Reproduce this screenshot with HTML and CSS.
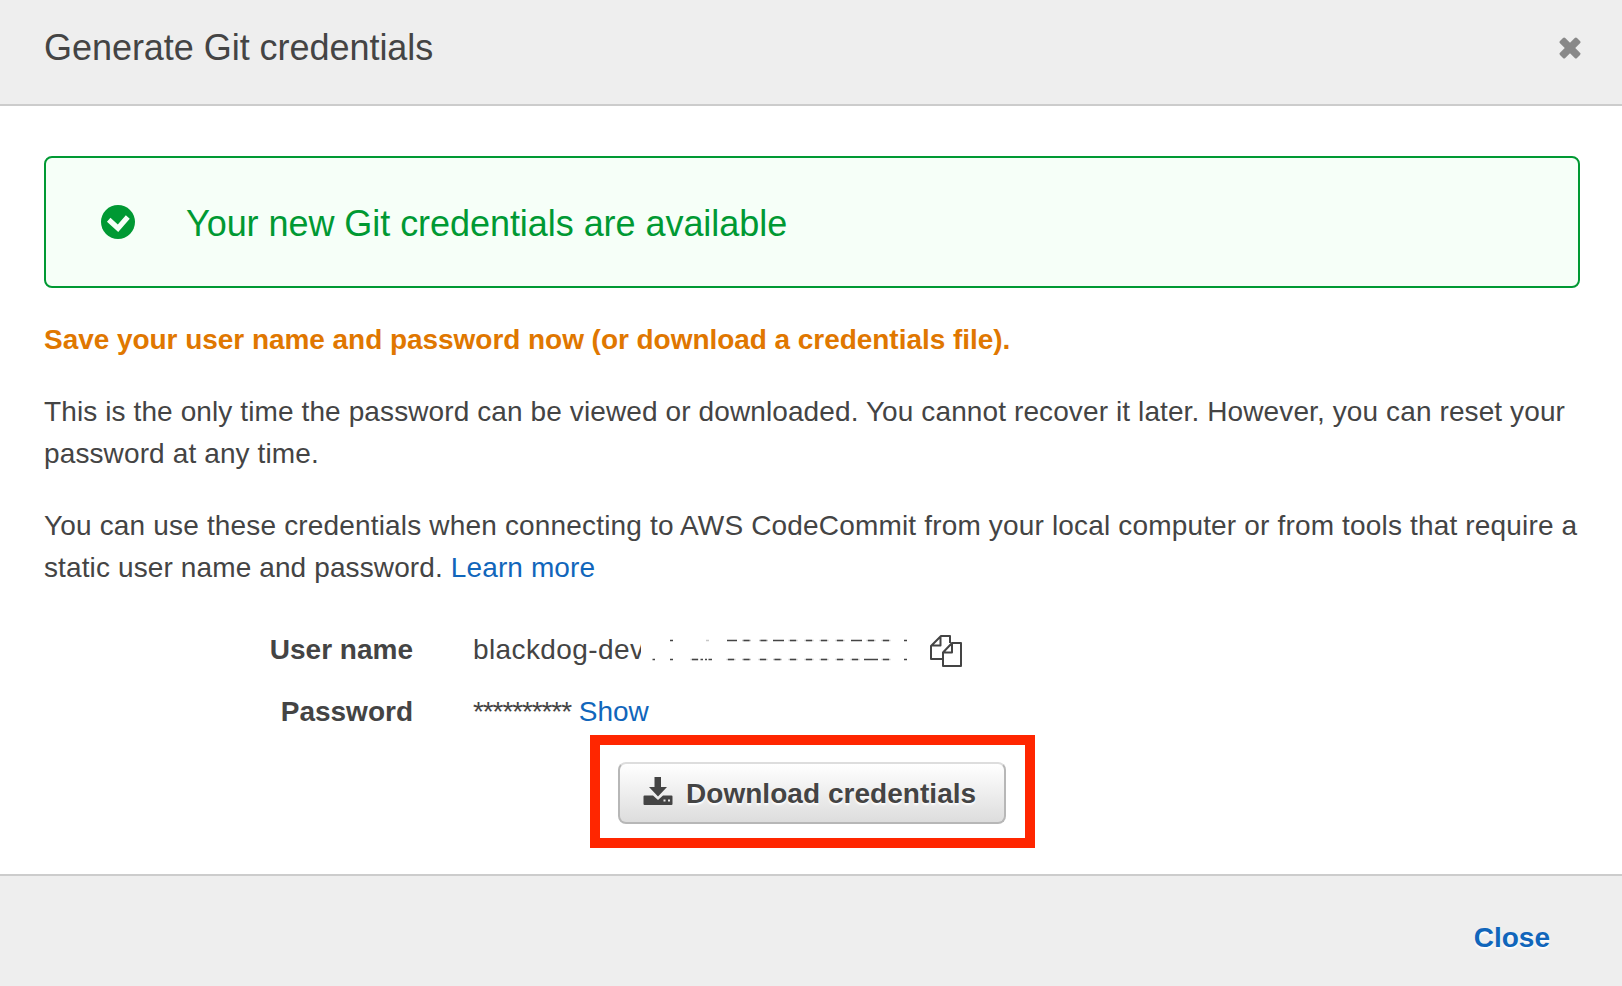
FILE: index.html
```html
<!DOCTYPE html>
<html lang="en">
<head>
<meta charset="utf-8">
<title>Generate Git credentials</title>
<link rel="stylesheet" href="styles.css">
</head>
<body>
<div class="modal">
  <header class="modal-header">
    <h1 class="modal-title">Generate Git credentials</h1>
    <button class="dismiss" aria-label="Dismiss">
      <svg viewBox="-11 -11 22 22" width="22" height="22" fill="#888"><rect x="-12" y="-3.7" width="24" height="7.4" rx="1.6" transform="rotate(45)"/><rect x="-12" y="-3.7" width="24" height="7.4" rx="1.6" transform="rotate(-45)"/></svg>
    </button>
  </header>
  <main class="modal-body">
    <div class="alert">
      <svg class="alert-icon" viewBox="0 0 34 34" width="34" height="34"><circle cx="17" cy="17" r="17" fill="#093"/><path d="M7.700 14.800 17 23.200 26.800 12" fill="none" stroke="#f6fff8" stroke-width="5.200"/></svg>
      <span class="alert-text">Your new Git credentials are available</span>
    </div>
    <p class="warning">Save your user name and password now (or download a credentials file).</p>
    <p class="text"><span class="line-viewed">This is the only time the password can be viewed or downloaded. You cannot recover it later. However, you can reset your</span><br><span class="line-short">password at any time.</span></p>
    <p class="text"><span class="line-usage">You can use these credentials when connecting to AWS CodeCommit from your local computer or from tools that require a</span><br><span class="line-short">static user name and password. <a class="link" href="#">Learn more</a></span></p>
    <dl class="fields">
      <dt class="label">User name</dt>
      <dd class="value user">
        <span class="user-text">blackdog-dev</span>
        <svg class="redacted" viewBox="641 629 270 42" width="270" height="42" fill="none" stroke="#444" stroke-width="1.300">
          <path d="M670 640.500h3M727 640.500h10M743.500 640.500h6M760.500 640.500h6M773 640.500h11M790 640.500h6M806 640.500h6M821 640.500h6M837 640.500h6M851 640.500h11M868 640.500h6M883 640.500h6M904 640.500h3"/>
          <path d="M652.500 659.500h2.500M670 659.500h3M692 659.500h6M700.500 659.500h2.500M705 659.500h2M708.500 659.500h3.500M728 659.500h6M743.500 659.500h6M760 659.500h6M774.500 659.500h6M790 659.500h6M806 659.500h6M821 659.500h6M837 659.500h6M852 659.500h6M864 659.500h14M883 659.500h6M904 659.500h3"/>
          <path opacity=".3" d="M706 640.500h3M742 640.500h9M759 640.500h9M788.500 640.500h9M804.500 640.500h9M819.500 640.500h9M835.500 640.500h9M866.500 640.500h9M881.500 640.500h9M690.500 659.500h8M726.500 659.500h9M742 659.500h9M758.500 659.500h9M773 659.500h9M788.500 659.500h9M804.500 659.500h9M819.500 659.500h9M835.500 659.500h9M850.500 659.500h9M881.500 659.500h9"/>
        </svg>
        <svg class="copy" viewBox="0 0 32 32" width="32" height="32" fill="none" stroke="#444" stroke-width="2" stroke-linejoin="round"><path d="M12 24H1V11L11 1H20V8M10.500 1.500V10.500H1.500M22 8H31V31H13V17.500L22 8ZM22 8V17.500H13"/></svg>
      </dd>
      <dt class="label">Password</dt>
      <dd class="value"><span class="stars">**********</span> <a class="link" href="#">Show</a></dd>
    </dl>
    <div class="download-wrap">
      <button class="download">
        <svg class="download-icon" viewBox="0 0 30 28" width="30" height="28" fill="#444"><path d="M11.500 0h6.500v10h6L15 19.500 6 10h5.500z"/><path fill-rule="evenodd" d="M1.500 18.500H10l5 4.500 5-4.500h8.500q1 0 1 1V27q0 1-1 1H1.500q-1 0-1-1V19.500q0-1 1-1zM20.500 22.500v2h2v-2zM25 22.500v2h2v-2z"/></svg>
        <span class="download-text">Download credentials</span>
      </button>
      <div class="highlight"></div>
    </div>
  </main>
  <footer class="modal-footer"><a class="close" href="#">Close</a></footer>
</div>
</body>
</html>
```
FILE: styles.css
```css
* { box-sizing: border-box; }
body { margin: 0; background: #fff; color: #444; font: 28px/42px "Liberation Sans", Arial, sans-serif; }
.modal { display: flex; flex-direction: column; height: 986px; overflow: hidden; }
.modal-header { display: flex; justify-content: space-between; height: 106px; padding: 21px 41px 0 44px; background: #eee; border-bottom: 2px solid #ccc; }
.modal-title { margin: 0; font-size: 36px; font-weight: 400; line-height: 54px; letter-spacing: -0.04px; white-space: nowrap; }
.dismiss { display: flex; width: 22px; height: 22px; margin-top: 16px; padding: 0; border: 0; background: none; }
.modal-body { flex: 1; padding: 50px 42px 0 44px; }
.alert { display: flex; align-items: center; height: 132px; padding: 0 55px; border: 2px solid #093; border-radius: 8px; background: #f6fff8; color: #093; font-size: 36px; line-height: 54px; white-space: nowrap; }
.alert-icon { margin-right: 51px; }
.alert-text { padding-top: 3px; letter-spacing: -0.05px; }
.warning { margin: 31px 0 0; color: #e07700; font-weight: 700; letter-spacing: -0.045px; white-space: nowrap; }
.text { margin: 30px 0 0; white-space: nowrap; }
.line-viewed { letter-spacing: 0.107px; }
.line-usage { letter-spacing: 0.167px; }
.line-short { letter-spacing: 0.12px; }
.link { color: #1166bb; text-decoration: none; }
.fields { display: grid; grid-template-columns: 369px 1fr; column-gap: 60px; row-gap: 20px; margin: 40px 0 0; }
.label { font-weight: 700; text-align: right; white-space: nowrap; }
.value { margin: 0; white-space: nowrap; }
.user { display: flex; }
.user-text { width: 168px; letter-spacing: 0.4px; }
.redacted { background: #fff; }
.copy { margin-top: 6px; margin-left: 19px; }
.stars { letter-spacing: -1.1px; }
.download-wrap { position: relative; display: flex; width: 388px; margin: 29px auto 0; }
.highlight { position: absolute; left: -28px; top: -27px; width: 445px; height: 113px; border: 10px solid #ff2600; pointer-events: none; }
.download { display: flex; align-items: center; width: 388px; height: 62px; padding: 0 23px; border: 2px solid #b7b7b7; border-top-color: #ddd; border-radius: 8px; background: linear-gradient(#fff, #ddd); color: #444; font: 700 28px/42px "Liberation Sans", Arial, sans-serif; text-shadow: 0 2px 2px #fff; white-space: nowrap; }
.download-icon { margin: 0 13px 4px 0; }
.download-text { padding-top: 1px; letter-spacing: 0.04px; }
.modal-footer { display: flex; justify-content: flex-end; height: 112px; padding: 41px 72px 0 0; background: #eee; border-top: 2px solid #ccc; }
.close { color: #1166bb; font-weight: 700; text-decoration: none; text-shadow: 0 2px 2px #fff; }
```
